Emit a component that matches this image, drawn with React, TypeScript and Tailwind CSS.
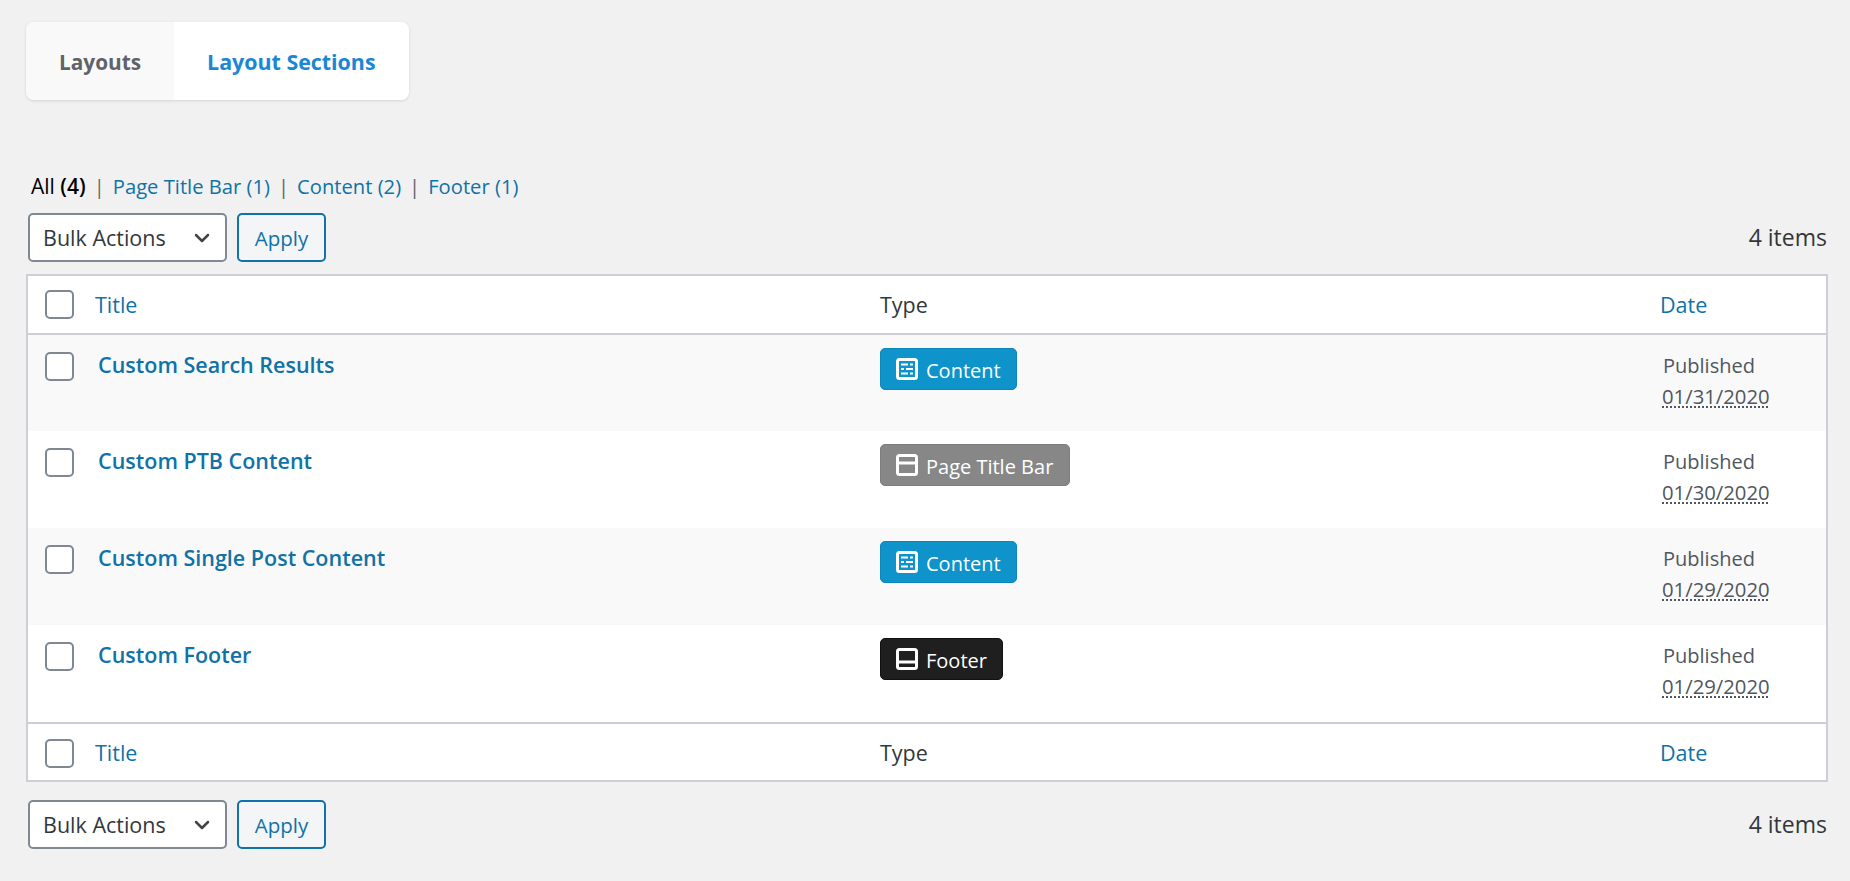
import type { ReactNode } from 'react';
import { ChevronDown } from 'lucide-react';

const rows = [
  { title: 'Custom Search Results', type: 'content', date: '01/31/2020' },
  { title: 'Custom PTB Content', type: 'ptb', date: '01/30/2020' },
  { title: 'Custom Single Post Content', type: 'content', date: '01/29/2020' },
  { title: 'Custom Footer', type: 'footer', date: '01/29/2020' },
];

function ContentIcon() {
  return (
    <svg viewBox="0 0 22 22" className="w-[22px] h-[22px]">
      <rect x="1.5" y="1.5" width="19" height="19" rx="2" fill="none" stroke="white" strokeWidth="3" />
      <path d="M5 6.5h7M14 6.5h3M5 11h3M10 11h7M5 15.5h7M14 15.5h3" stroke="white" strokeWidth="2" />
    </svg>
  );
}

function TitleBarIcon() {
  return (
    <svg viewBox="0 0 22 22" className="w-[22px] h-[22px]">
      <rect x="1.5" y="1.5" width="19" height="19" rx="2" fill="none" stroke="white" strokeWidth="3" />
      <rect x="2" y="7.5" width="18" height="3" fill="white" />
    </svg>
  );
}

function FooterIcon() {
  return (
    <svg viewBox="0 0 22 22" className="w-[22px] h-[22px]">
      <rect x="1.5" y="1.5" width="19" height="19" rx="2" fill="none" stroke="white" strokeWidth="3" />
      <rect x="2" y="12.5" width="18" height="3" fill="white" />
    </svg>
  );
}

function Badge({ type }: { type: string }) {
  if (type === 'ptb') {
    return (
      <span className="inline-flex items-center h-[42px] w-[190px] rounded-[5px] bg-[#878787] border border-[#7d7d7d] pl-[15px] gap-2 text-white text-[20px]">
        <TitleBarIcon />
        <span className="mt-[3px]">Page Title Bar</span>
      </span>
    );
  }
  if (type === 'footer') {
    return (
      <span className="inline-flex items-center h-[42px] w-[123px] rounded-[5px] bg-[#1f1f1f] border border-[#111111] pl-[15px] gap-2 text-white text-[20px]">
        <FooterIcon />
        <span className="mt-[3px]">Footer</span>
      </span>
    );
  }
  return (
    <span className="inline-flex items-center h-[42px] w-[137px] rounded-[5px] bg-[#0e93cb] border border-[#0c86bb] pl-[15px] gap-2 text-white text-[20px]">
      <ContentIcon />
      <span className="mt-[3px]">Content</span>
    </span>
  );
}

function Check() {
  return (
    <input
      type="checkbox"
      className="appearance-none block w-[29px] h-[29px] shrink-0 ml-[17px] rounded-[5px] bg-white border-2 border-[#7e8993]"
    />
  );
}

function HeadRow({ className }: { className: string }) {
  return (
    <div className={`grid grid-cols-[852px_780px_1fr] items-center bg-white text-[21.5px] ${className}`}>
      <div className="flex items-center gap-[21px]">
        <Check />
        <span className="text-[#0f72a8]">Title</span>
      </div>
      <div className="text-[#32373c]">Type</div>
      <div className="text-[#0f72a8]">Date</div>
    </div>
  );
}

function TableNav({ className }: { className: string }) {
  return (
    <div className={`flex items-center pl-[28px] pr-[23px] ${className}`}>
      <div className="flex items-center justify-between w-[199px] h-[49px] rounded-[5px] bg-white border-2 border-[#7e8993] pl-[13px] pr-[11px] text-[#32373c] text-[21.5px]">
        Bulk Actions
        <ChevronDown size={24} strokeWidth={2.5} className="text-[#444444]" />
      </div>
      <button className="ml-[10px] w-[89px] h-[49px] rounded-[5px] bg-[#f3f5f6] border-2 border-[#0f72a8] text-[#0f72a8] text-[20.5px]">
        Apply
      </button>
      <span className="ml-auto -mt-[2px] text-[#32373c] text-[23px]">4 items</span>
    </div>
  );
}

function Tab({ active, children }: { active?: boolean; children: ReactNode }) {
  return (
    <div
      className={
        active
          ? 'flex items-center h-full pt-[2px] px-[33px] bg-white text-[#1a87d6] font-bold text-[21.4px]'
          : 'flex items-center h-full pt-[2px] px-[33px] bg-[#f9f9f9] text-[#5f6368] font-bold text-[20.8px]'
      }
    >
      {children}
    </div>
  );
}

export default function App() {
  return (
    <div className="h-[881px] overflow-hidden bg-[#f1f1f1] font-['Open_Sans','Noto_Sans',sans-serif] text-[20px] leading-[32px]">
      {/* tabs */}
      <div className="pt-[22px] pl-[26px]">
        <div className="flex w-fit h-[78px] rounded-[8px] overflow-hidden shadow-[0_1px_3px_rgba(0,0,0,0.12)]">
          <Tab>Layouts</Tab>
          <Tab active>Layout Sections</Tab>
        </div>
      </div>

      {/* filter links */}
      <div className="flex items-center gap-[8px] mt-[70px] pl-[31px] h-[32px] text-[20.2px] text-[#0f72a8]">
        <span className="text-black text-[21px]">All <span className="font-semibold">(4)</span></span>
        <span className="text-[#666666]">|</span>
        <span>Page Title Bar (1)</span>
        <span className="text-[#666666]">|</span>
        <span>Content (2)</span>
        <span className="text-[#666666]">|</span>
        <span>Footer (1)</span>
      </div>

      <TableNav className="mt-[11px]" />

      {/* table */}
      <div className="mt-[12px] ml-[26px] w-[1802px] border-2 border-[#ccd0d4] bg-white">
        <HeadRow className="h-[59px] border-b-2 border-[#ccd0d4]" />
        {rows.map((row, i) => (
          <div
            key={row.title}
            className={`grid grid-cols-[852px_780px_1fr] ${i === 0 ? 'h-[96px]' : 'h-[97px]'} ${i % 2 === 0 ? 'bg-[#f9f9f9]' : 'bg-white'}`}
          >
            <div className="flex items-start gap-[24px] pt-[17px]">
              <Check />
              <span className="font-semibold text-[#0f72a8] text-[21.5px] -mt-[3px]">{row.title}</span>
            </div>
            <div className="pt-[13px]">
              <Badge type={row.type} />
            </div>
            <div className="pl-[3px] pt-[15px] leading-[31px] text-[#50575e]">
              Published
              <br />
              <abbr className="-ml-[1px] text-[20.3px] underline decoration-dotted">{row.date}</abbr>
            </div>
          </div>
        ))}
        <HeadRow className="h-[58px] pt-[2px] border-t-2 border-[#ccd0d4]" />
      </div>

      <TableNav className="mt-[18px]" />
    </div>
  );
}
